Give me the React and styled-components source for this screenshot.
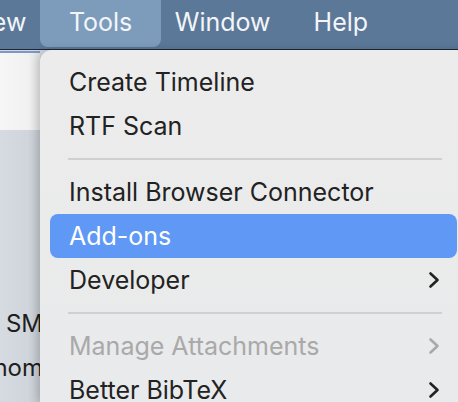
import styled, { createGlobalStyle } from "styled-components";

const GlobalStyle = createGlobalStyle`
  *, *::before, *::after {
    box-sizing: border-box;
  }
  html, body {
    margin: 0;
    padding: 0;
    background: #d4d9df;
    overflow: hidden;
  }
  body {
    font-family: "Inter", "Liberation Sans", sans-serif;
    -webkit-font-smoothing: antialiased;
  }
`;

const titles = [
  { label: "View", first: true },
  { label: "Tools", active: true },
  { label: "Window" },
  { label: "Help" },
];

const items = [
  { label: "Create Timeline" },
  { label: "RTF Scan" },
  { sep: true },
  { label: "Install Browser Connector" },
  { label: "Add-ons", selected: true },
  { label: "Developer", sub: true },
  { sep: true },
  { label: "Manage Attachments", sub: true, disabled: true },
  { label: "Better BibTeX", sub: true },
];

export default function App() {
  return (
    <Screen>
      <GlobalStyle />
      <MenuBar>
        {titles.map(t => (
          <MenuTitle key={t.label} $active={t.active} $first={t.first}>
            {t.label}
          </MenuTitle>
        ))}
      </MenuBar>
      <Desktop>
        <BackWindow>
          <WindowTop />
          <Sidebar>
            <SideLine>n SM</SideLine>
            <SideLine>nom</SideLine>
          </Sidebar>
        </BackWindow>
        <Menu>
          {items.map((it, i) =>
            it.sep ? (
              <Separator key={i} />
            ) : (
              <Item key={i} $selected={it.selected} $disabled={it.disabled}>
                <span>{it.label}</span>
                {it.sub && <Chevron />}
              </Item>
            )
          )}
        </Menu>
      </Desktop>
    </Screen>
  );
}

function Chevron() {
  return (
    <svg width="12" height="18" viewBox="0 0 12 18">
      <path
        d="M2.5 2.5 L9.5 9 L2.5 15.5"
        fill="none"
        stroke="currentColor"
        strokeWidth="2.6"
        strokeLinecap="round"
        strokeLinejoin="round"
      />
    </svg>
  );
}

const Screen = styled.div`
  width: 458px;
  height: 402px;
  overflow: hidden;
  display: flex;
  flex-direction: column;
`;

const MenuBar = styled.nav`
  height: 50px;
  flex-shrink: 0;
  display: flex;
  align-items: flex-start;
  background: #5b7898;
  border-bottom: 1.5px solid #1d2733;
`;

const MenuTitle = styled.div`
  display: flex;
  align-items: center;
  padding: 0 ${p => (p.$active ? "29px" : "21.5px")} 3px;
  margin: 0 ${p => (p.$active ? "-8px" : "0")};
  margin-left: ${p => (p.$first ? "-53px" : p.$active ? "-8px" : "0")};
  height: 47px;
  border-radius: 0 0 8px 8px;
  background: ${p => (p.$active ? "#7d9cbc" : "transparent")};
  color: #f3f5f8;
  font-size: 25px;
  white-space: nowrap;
`;

const Desktop = styled.div`
  flex: 1;
  display: flex;
  min-height: 0;
`;

const BackWindow = styled.div`
  width: 40px;
  flex-shrink: 0;
  display: flex;
  flex-direction: column;
  border-top: 2px solid #7b98c9;
  margin-top: 1px;
  background: linear-gradient(90deg, #d6dbe1 0%, #d0d5dc 70%, #c3c8cf 100%);
`;

const WindowTop = styled.div`
  height: 77px;
  background: linear-gradient(90deg, #f6f6f6 0%, #f1f1f1 70%, #e2e2e2 100%);
`;

const Sidebar = styled.div`
  flex: 1;
  overflow: hidden;
  display: flex;
  flex-direction: column;
  align-items: flex-end;
  padding-top: 172px;
`;

const SideLine = styled.div`
  height: 44px;
  line-height: 44px;
  font-size: 24px;
  color: #1e1e1e;
  white-space: nowrap;
  margin-right: -3px;
`;

const Menu = styled.div`
  width: 427px;
  flex-shrink: 0;
  padding: 10px 10px 0 10px;
  background: linear-gradient(180deg, #ececec 0%, #e9eaeb 100%);
  border-top-left-radius: 12px;
  box-shadow: -2px 0 10px rgba(0, 0, 0, 0.18);
  display: flex;
  flex-direction: column;
`;

const Item = styled.div`
  height: 44px;
  flex-shrink: 0;
  display: flex;
  align-items: center;
  justify-content: space-between;
  padding: 0 17px 0 19px;
  border-radius: 8px;
  font-size: 25px;
  color: ${p => (p.$selected ? "#ffffff" : p.$disabled ? "#a9a9aa" : "#222222")};
  background: ${p => (p.$selected ? "#6098f6" : "transparent")};
  white-space: nowrap;

  svg {
    color: ${p => (p.$disabled ? "#a9a9aa" : "#222222")};
  }
`;

const Separator = styled.div`
  height: 2px;
  flex-shrink: 0;
  margin: 10px 15px 10px 18px;
  background: #d0d0d0;
`;
